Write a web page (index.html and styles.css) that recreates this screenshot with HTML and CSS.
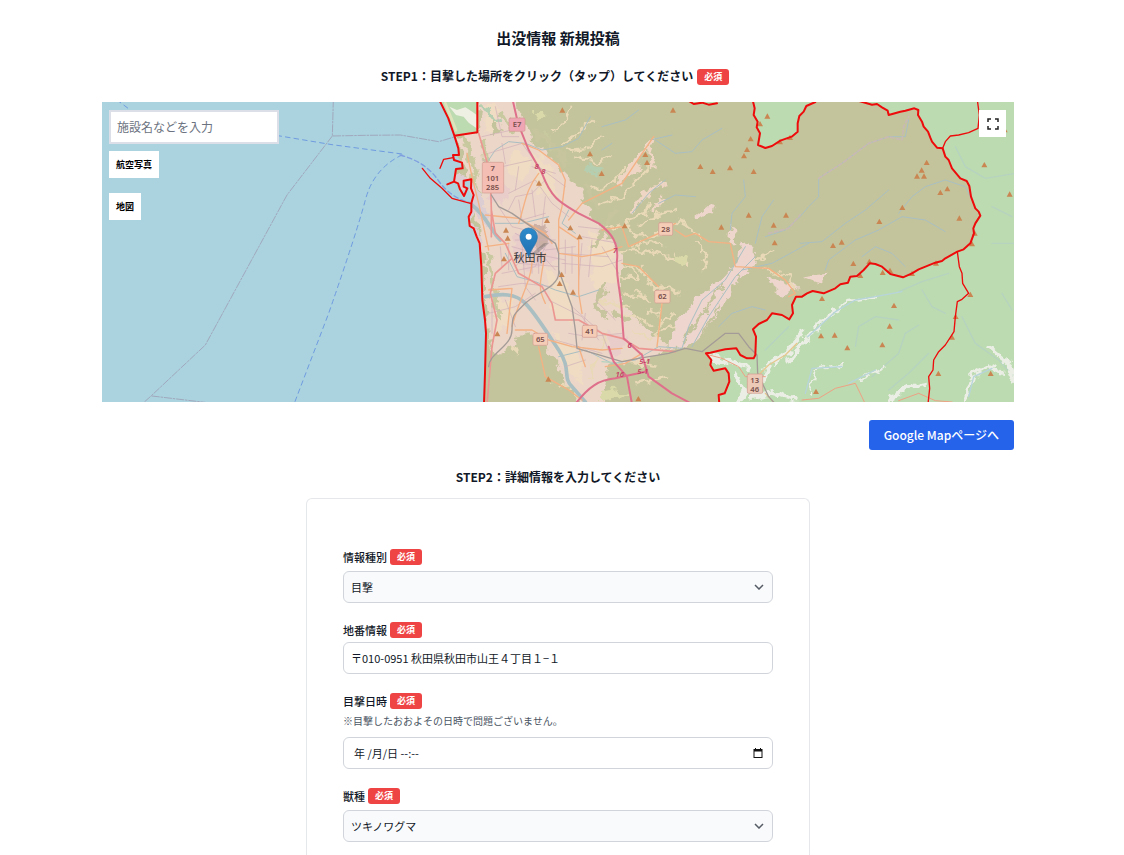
FILE: index.html
```html
<!DOCTYPE html>
<html lang="ja">
<head>
<meta charset="utf-8">
<meta name="viewport" content="width=device-width, initial-scale=1">
<title>出没情報 新規投稿</title>
<link rel="stylesheet" href="styles.css">
</head>
<body>
<main class="page">
  <h1 class="title">出没情報 新規投稿</h1>
  <h2 class="step">STEP1：目撃した場所をクリック（タップ）してください <span class="badge">必須</span></h2>

  <section class="map" aria-label="地図">
    <svg class="map-canvas" viewBox="0 0 2736 900" preserveAspectRatio="xMinYMin slice" role="img" aria-label="秋田市周辺の地図">
      <defs>
        <filter id="ragged" x="-5%" y="-5%" width="110%" height="110%">
          <feTurbulence type="fractalNoise" baseFrequency="0.035" numOctaves="3" seed="4" result="n"/>
          <feDisplacementMap in="SourceGraphic" in2="n" scale="38" xChannelSelector="R" yChannelSelector="G"/>
        </filter>
        <linearGradient id="pinfill" x1="0" y1="0" x2="0" y2="1"><stop offset="0" stop-color="#2e8bcb"/><stop offset="1" stop-color="#1f6fb0"/></linearGradient>
        <path id="peak" d="M0-9 9 7H-9Z" fill="#ca8652"/>
        <path id="city" d="M1057 107 1126 97V0H1756L1775 12 1800 8 1820 14 1845 10 1850 0H1952L1958 25 1955 45 1967 65 1964 82 1974 100 1968 135 1990 144 2010 138 2035 122 2069 110 2087 95V70L2092 48 2105 35 2113 18 2140 6 2279 6 2310 14 2325 12 2340 22 2357 32 2360 45 2395 35 2410 32 2437 25 2449 30 2448 45 2460 65 2465 80 2478 95 2485 113 2490 125 2505 143 2522 145 2530 170 2540 180 2550 205 2575 235 2594 243 2602 258 2607 290 2620 325 2630 335 2635 347 2620 370 2614 385 2616 400 2605 430 2585 448 2566 455 2530 475 2520 483 2500 488 2450 508 2430 520 2403 532 2365 522 2340 500 2320 492 2303 490 2285 510 2265 528 2245 530 2238 548 2215 553 2200 565 2165 580 2132 573 2115 580 2100 590 2082 590 2070 615 2073 640 2062 658 2040 645 2010 640 1995 660 1970 672 1953 688 1962 710 1960 765 1955 775 1935 775 1915 765 1903 745 1870 748 1850 752 1825 758 1812 760 1828 780 1825 795 1835 812 1870 805 1880 820 1882 845 1868 880 1850 885 1852 912H1146L1149 820 1152 700 1141 600 1138 500 1133 440 1120 410 1115 385 1100 378 1100 350 1108 335 1105 315 1112 290 1100 270 1108 240 1086 242 1090 270 1070 275 1074 250 1056 245 1062 207 1080 205 1078 185 1066 170 1069 145Z"/>
        <clipPath id="cityclip"><use href="#city"/></clipPath>
      </defs>
      <rect width="2736" height="900" fill="#aad3df"/>
      <g transform="translate(0 -6)" fill="none" stroke-linecap="round" stroke-linejoin="round">
        <path d="M1012 0 1039 55 1057 107H1200V912H2742V0Z" fill="#bddbb1"/>
        <path d="M1042 20 1065 30 1090 22 1112 36 1124 45V85L1100 68 1085 50 1062 45Z" fill="#eef0e4"/>
        <path d="M1030 10 1062 90" stroke="#dfe3bb" stroke-width="8"/>
        <use href="#city" fill="#c4c49c"/>

        <g filter="url(#ragged)" clip-path="url(#cityclip)">
          <path d="M1062 110 1130 95 1140 0 1230 0 1290 120 1370 200 1420 250 1470 350 1520 410 1560 470 1560 610 1640 690 1700 740 1620 790 1520 790 1500 920 1420 900 1370 800 1330 740 1290 700 1240 710 1230 740 1180 770 1160 700 1148 500 1125 370 1110 260Z" fill="#ecd6c8"/>
          <path d="M1150 10 1190 30 1190 80 1150 95ZM1230 150 1290 180 1270 240 1220 220ZM1330 500 1400 560 1420 670 1350 650ZM1460 390 1530 430 1550 540 1480 570ZM1290 150 1350 200 1370 300 1310 280ZM1350 690 1430 760 1450 860 1380 800ZM1180 600 1240 600 1220 680 1180 690Z" fill="#efdcc2"/>
          <path d="M1240 410 1340 390 1370 470 1290 520 1230 470ZM1180 220 1220 260 1200 320 1160 290ZM1510 690 1580 720 1540 770Z" fill="#e8cdcb"/>
          <path d="M1300 380 1330 375 1335 430 1310 450Z" fill="#cbb0a6"/>
          <path d="M1085 110 1110 180 1130 290M1155 460 1175 560 1190 660M1145 130 1150 180M1200 40 1230 90M1330 100 1350 150" stroke="#c9c9a0" stroke-width="14"/>
          <path d="M1540 330 1500 400 1480 440M1510 560 1480 610 1510 650M1450 250 1490 330M1300 100 1350 130 1390 190M1580 660 1530 640" stroke="#c6c59d" stroke-width="16"/>
          <path d="M1700 720C1740 640 1780 590 1830 560S1910 490 1910 430L1965 440 1960 500C1900 520 1880 600 1840 650S1800 740 1700 750ZM2000 530 2090 560 2050 590 2010 560Z" fill="#eed6cf"/>
          <path d="M1745 720 1800 640 1860 560M1790 720 1850 620" stroke="#c4c49c" stroke-width="7"/>
          <path d="M1780 350 1830 310 1842 312 1820 345 1790 362ZM1884 390 1894 370 1900 430H1882ZM2100 530 2180 520 2150 550Z" fill="#efd6cd"/>
          <g stroke="#e9d9b7" stroke-width="7">
            <path d="M1380 130 1430 100 1470 60M1390 150 1450 145 1500 110M1420 170 1480 190 1530 160M1350 90 1390 65 1410 20M1470 270 1530 250 1570 200M1490 310 1560 290 1640 200M1500 390 1570 370 1630 340 1640 310M1570 370 1600 410 1680 400 1730 360 1760 380 1800 410M1610 380 1640 350 1720 330M1540 450 1600 450 1670 460 1730 480M1600 440 1640 420 1690 440M1560 500 1610 500 1640 540 1660 570M1650 570 1700 560 1730 580M1560 530 1610 540 1590 500M1570 580 1640 600 1600 570M1680 560 1670 650 1670 740M1670 640 1640 630M1675 690 1720 680M1675 670 1710 640M1560 640 1610 650 1650 680M1590 700 1650 710M1780 430 1810 460 1800 510M1720 460 1760 500M1960 480 2020 450M1980 500 2060 530 2080 570M1500 600 1580 620M1510 700 1470 830M1270 780 1230 740M1330 800 1300 770M1350 850 1280 830M1420 890 1390 850 1330 890M1220 850 1250 810 1270 830M1570 780 1660 800M1600 850 1700 830"/>
          </g>
          <path d="M1550 250 1600 190 1650 120M1560 230 1610 200M1640 150 1655 200M1590 330 1640 270 1690 250M1655 330 1680 300" stroke="#efd6c4" stroke-width="13"/>
          <path d="M1715 460 1755 470 1750 500 1725 485ZM1290 30 1330 30 1330 55 1300 60ZM1500 870 1540 860 1580 890 1500 900Z" fill="#d9d9a9"/>
          <path d="M1150 25 1170 50 1190 60M1455 200 1490 210 1480 230Z" stroke="#b5ceb0" stroke-width="12"/>
          <path d="M1155 800 1180 770 1240 770 1310 720 1350 850 1430 912H1150ZM1180 60 1200 90 1170 100Z" fill="#c4c49c"/>
          <path d="M1050 220 1110 230 1170 370 1190 410 1160 390 1120 330 1110 370 1140 430 1130 450 1080 370Z" fill="#dccdd3"/>
        </g>

        <!-- rivers -->
        <g stroke="#a9bfc2" stroke-width="3">
          <path d="M1110 315C1155 350 1165 390 1195 420M1150 590C1200 580 1240 580 1270 610S1330 690 1370 750 1380 830 1410 860L1450 906" stroke-width="11"/>
          <path d="M1210 460 1245 530 1300 545 1360 570 1430 590 1490 570M1160 180 1180 150 1220 125 1270 130 1320 150 1380 140 1430 115 1465 50M1180 370 1260 370 1340 350M1400 330 1380 370 1420 400"/>
          <path d="M1370 770 1450 750 1530 790 1600 780 1670 740 1740 745 1760 680 1800 600 1870 540 1930 440M1770 740 1820 650 1900 530 1960 470M1920 510 2010 490 2120 430"/>
          <path d="M1500 80 1570 60 1610 30M1500 150 1530 130M1660 120 1720 160 1770 155 1800 120 1860 85M1645 120 1710 105M1590 340 1640 280 1690 240M1670 310 1720 285 1780 290M1885 390 1890 340 1930 290 1925 240M1960 430 1980 350 2015 300M1990 410 2050 390 2094 350 2120 320 2150 290 2150 235 2220 190 2300 130 2360 110 2410 110 2420 60M1850 680 1890 640 1950 620 1990 630M2094 430 2160 425 2230 370 2290 330 2360 270M2170 510 2180 480 2260 420 2330 390 2400 350 2470 360 2530 395M2390 340 2430 290 2470 260 2530 240 2590 260 2610 300M2280 470 2320 440 2370 460 2410 500"/>
        </g>
        <path d="M2000 400 2060 385 2094 345M2150 235 2220 190 2300 130 2360 110 2400 120 2405 80 2420 50" stroke="#c9b9b4" stroke-width="5" stroke-dasharray="10 8"/>
        <g stroke="#b5d3bf" stroke-width="4">
          <path d="M2560 140 2590 200 2650 235 2740 220M2670 320 2730 350M2670 430 2740 430M2540 520 2460 545 2390 575M2460 570 2490 620 2530 640M2260 740 2270 680 2320 650 2390 660M2450 675 2410 700 2390 760 2310 830M2360 870 2420 820 2480 760M2580 650 2620 730 2690 780 2736 830M2700 580 2730 630M1500 785 1560 790M1990 750 2060 680M1950 860 1990 840"/>
        </g>
        <g filter="url(#ragged)" stroke="#eaeee5" stroke-width="9">
          <path d="M2110 720 2150 690 2190 640 2240 605 2320 590M2135 680 2220 620" />
          <path d="M2120 890 2140 810 2220 795M2270 840 2350 800" stroke-width="6"/>
          <path d="M2360 900 2420 860 2480 850M2590 890 2610 830 2660 800 2700 820M2660 740 2720 790 2740 840M1985 830 2000 800 2050 760 2100 700M2060 780 2110 720M1900 830 1930 870 1910 900M1830 770 1900 790 1940 800M1950 890 2010 880 2080 900" stroke-width="14"/>
        </g>
        <path d="M2117 710 2200 635 2260 600 2320 590 2400 575M2110 880 2130 805 2220 800M2240 850 2320 810M2600 890 2615 830 2670 805" stroke="#b7d4da" stroke-width="4"/>

        <!-- minor roads -->
        <g stroke="#cfafb8" stroke-width="2">
          <path d="M1160 160 1260 130 1310 200 1390 260M1220 280 1300 240 1350 310 1400 350M1190 320 1230 380 1310 400M1240 400 1330 450 1420 440M1230 440 1340 470 1390 480M1200 520 1300 500 1330 440M1260 430 1270 560 1300 600M1380 460 1520 470M1380 490 1500 500 1560 480M1410 440V520M1390 420V520M1440 430 1430 540M1470 420 1460 530M1160 640 1240 620 1300 580M1410 620 1500 700 1530 780M1400 700 1460 710 1560 700M1340 600 1440 650 1490 720M1180 20 1200 110 1250 110M1140 110 1230 90M1290 200 1360 220M1170 590V700M1210 600 1240 680M1430 380 1520 390M1440 410 1550 430M1280 420 1360 510M1320 400 1240 500M1140 180 1200 200 1290 180M1220 330 1240 290 1290 280 1330 240M1250 300 1260 360 1330 340M1290 270 1300 350M1330 290 1320 380M1195 440 1200 500M1220 430V510M1290 400V520M1310 400V520M1240 420H1360M1250 490 1370 500M1190 560 1260 550 1350 560M1480 600 1540 660M1450 640 1440 720M1360 720 1500 760M1390 800 1450 780M1500 440 1550 520M1250 200 1240 270M1200 130 1210 190"/>
        </g>
        <!-- trunk and primary roads -->
        <g stroke="#f4b183" stroke-width="4">
          <path d="M1095 160 1110 230 1130 310 1160 450M1150 345 1250 355 1330 400 1350 430M1310 220C1270 270 1270 310 1250 370M1150 440 1220 430M1260 130 1310 150 1370 195 1390 240 1380 320 1370 360 1370 460 1440 470 1500 460 1560 440M1370 380 1430 420 1430 580 1440 640M1160 570 1230 565 1215 700M1240 690 1290 690 1340 720 1410 740 1500 750 1560 745M1290 480C1290 540 1250 600 1230 680M1330 460C1310 560 1310 570 1330 610M1400 360 1440 310 1500 280 1560 250 1600 190 1655 110M1500 390 1560 380 1580 440 1670 400 1720 370M1560 490 1610 500 1670 560M1680 610 1665 740M1720 390 1750 410 1780 400 1820 425 1885 430 1900 500 2000 505 2050 540 2080 580 2060 590M1310 740 1330 830 1400 870 1440 900M1430 740 1450 800M1510 800 1570 790 1620 760"/>
        </g>
        <path d="M1130 100 1165 220 1168 330 1180 400 1210 430 1250 520 1320 560 1350 610 1360 660 1430 660 1500 700 1560 715 1610 745 1720 755M1168 330V410M1230 475 1180 520 1165 580 1185 660 1170 740 1155 912" stroke="#ec9692" stroke-width="5"/>
        <path d="M1810 762 1860 775 1910 800 1930 830 1990 830M2100 900 2150 895 2200 865 2260 850 2290 912M2390 902 2450 880 2500 902 2550 906" stroke="#eea184" stroke-width="3"/>
        <path d="M1960 835 2000 795 2050 765 2085 730M1990 880 2020 912" stroke="#e6c78e" stroke-width="4"/>
        <path d="M1168 285 1190 320 1230 340 1360 430 1370 460V520C1370 560 1300 580 1270 610S1230 640 1230 690 1160 760 1160 800M1370 510 1410 620 1420 690 1425 745 1560 785 1610 775 1700 760 1750 745 1800 755 1870 700 1910 700 1940 740 1965 765 1967 820 2000 890 2020 912" stroke="#a39b97" stroke-width="4"/>
        <path d="M1232 0 1248 70 1280 150 1320 220C1350 300 1380 310 1430 340L1490 370C1530 400 1550 430 1545 480S1560 590 1560 650L1565 715 1620 765 1640 830 1710 880 1770 912M1420 912C1460 860 1490 840 1540 835L1630 815M1520 740 1535 785 1575 830 1590 912" stroke="#df708b" stroke-width="6"/>

        <!-- sea routes -->
        <path d="M45 0 85 30M165 50 540 109 690 134 900 162M900 165Q815 205 790 300T680 640L575 915" stroke="#709bdf" stroke-width="3" stroke-dasharray="14 12"/>
        <path d="M694 0 691 108 790 106 895 105 1010 125 1057 111M691 108 555 285 310 735 145 890 120 912M150 888 350 912" stroke="#a1a8bd" stroke-width="3" stroke-dasharray="22 5 5 5"/>
        <path d="M894 165Q970 185 1008 240T1110 310" stroke="#809ee0" stroke-width="4" stroke-dasharray="14 9"/>

        <!-- mountain peaks -->
        <g>
          <use href="#peak" x="1381" y="31"/><use href="#peak" x="1464" y="162"/><use href="#peak" x="1311" y="250"/><use href="#peak" x="1499" y="221"/><use href="#peak" x="1335" y="362"/><use href="#peak" x="1405" y="384"/><use href="#peak" x="1433" y="411"/><use href="#peak" x="1212" y="391"/><use href="#peak" x="1217" y="415"/><use href="#peak" x="1206" y="477"/><use href="#peak" x="1379" y="524"/><use href="#peak" x="1373" y="551"/><use href="#peak" x="1413" y="577"/><use href="#peak" x="1186" y="702"/><use href="#peak" x="1339" y="838"/><use href="#peak" x="1609" y="897"/>
          <use href="#peak" x="1713" y="31"/><use href="#peak" x="1630" y="164"/><use href="#peak" x="1635" y="188"/><use href="#peak" x="1568" y="378"/><use href="#peak" x="1795" y="200"/><use href="#peak" x="1832" y="215"/><use href="#peak" x="1884" y="204"/><use href="#peak" x="1955" y="215"/><use href="#peak" x="1926" y="168"/><use href="#peak" x="1935" y="149"/><use href="#peak" x="1946" y="117"/><use href="#peak" x="1996" y="49"/><use href="#peak" x="1974" y="72"/><use href="#peak" x="1940" y="346"/><use href="#peak" x="2052" y="346"/><use href="#peak" x="2015" y="376"/><use href="#peak" x="2018" y="429"/><use href="#peak" x="1858" y="382"/><use href="#peak" x="2034" y="126"/><use href="#peak" x="2064" y="113"/>
          <use href="#peak" x="2474" y="188"/><use href="#peak" x="2459" y="211"/><use href="#peak" x="2445" y="229"/><use href="#peak" x="2466" y="229"/><use href="#peak" x="2536" y="267"/><use href="#peak" x="2515" y="278"/><use href="#peak" x="2401" y="323"/><use href="#peak" x="2332" y="365"/><use href="#peak" x="2572" y="355"/><use href="#peak" x="2219" y="427"/><use href="#peak" x="2193" y="437"/><use href="#peak" x="2254" y="491"/><use href="#peak" x="2302" y="485"/><use href="#peak" x="2342" y="518"/><use href="#peak" x="2364" y="512"/><use href="#peak" x="2160" y="596"/><use href="#peak" x="2376" y="617"/><use href="#peak" x="2363" y="679"/><use href="#peak" x="2341" y="735"/><use href="#peak" x="2157" y="708"/><use href="#peak" x="2198" y="706"/><use href="#peak" x="2236" y="744"/><use href="#peak" x="2142" y="875"/><use href="#peak" x="2509" y="821"/><use href="#peak" x="2666" y="821"/><use href="#peak" x="2647" y="195"/><use href="#peak" x="2723" y="283"/><use href="#peak" x="2605" y="584"/><use href="#peak" x="2561" y="650"/><use href="#peak" x="2550" y="712"/><use href="#peak" x="2618" y="400"/><use href="#peak" x="2610" y="432"/><use href="#peak" x="2502" y="490"/><use href="#peak" x="2430" y="521"/><use href="#peak" x="2275" y="527"/><use href="#peak" x="2708" y="90"/>
        </g>

        <!-- municipal borders -->
        <g stroke="#ee0b0b">
          <path d="M1012 0 1039 55 1057 107 1126 97V0M1057 107 1069 145 1071 165 1053 165 1056 180 1080 188 1082 205 1062 207 1056 245 1036 253M1056 245 1068 250 1074 268 1086 288 1096 265 1085 260V242L1108 238 1107 265 1115 285 1108 310 1108 335 1100 350 1103 378 1115 385 1124 410 1133 430 1138 500 1141 600 1149 660 1152 700 1149 820 1146 912" stroke-width="6"/>
          <path d="M961 205 985 235 1020 265 1050 295 1105 310M1014 205 1025 178 1053 173" stroke-width="4"/>
          <path d="M1756 0 1775 12 1800 8 1820 14 1845 10M1952 0 1958 25 1955 45 1967 65 1964 82 1974 100 1968 135 1990 144 2010 138 2035 122 2069 110 2087 95V70L2092 48 2105 35 2113 18 2140 6M2274 4 2310 14 2325 12 2340 22 2357 32 2360 45 2395 35 2410 32 2437 25 2449 30 2448 45 2460 65 2465 80 2478 95 2485 113 2490 125 2505 143 2522 145 2530 170 2540 180 2550 205 2575 235 2594 243 2602 258 2607 290 2620 325 2630 335 2635 347 2620 370 2614 385 2616 400 2605 430 2585 448 2566 455 2530 475 2520 483 2500 488 2450 508 2430 520 2403 532 2365 522 2340 500 2320 492 2303 490 2285 510 2265 528 2245 530 2238 548 2215 553 2200 565 2165 580 2132 573 2115 580 2100 590 2082 590 2070 615 2073 640 2062 658 2040 645 2010 640 1995 660 1970 672 1953 688 1962 710 1960 765 1955 775 1935 775 1915 765 1903 745 1870 748 1850 752 1825 758 1812 760 1828 780 1825 795 1835 812 1870 805 1880 820 1882 845 1868 880 1850 885 1852 912" stroke-width="6"/>
          <path d="M2626 0 2632 45 2628 85 2600 98 2570 105 2545 108 2530 125 2522 145M2566 455 2572 500 2580 520 2582 550 2600 580 2580 598 2566 605 2560 650 2556 695 2530 735 2510 755 2495 780 2493 810 2480 830 2483 865 2478 912" stroke-width="4"/>
        </g>

        <!-- road shields -->
        <g stroke="#d29b91" stroke-width="2" fill="#f5beb4">
          <rect x="1221" y="54" width="48" height="40" rx="4" fill="#f0a5b5"/>
          <rect x="1141" y="187" width="64" height="92" rx="4"/>
          <g fill="#f5ccb6"><rect x="1670" y="368" width="42" height="38" rx="4"/><rect x="1658" y="571" width="46" height="38" rx="4"/><rect x="1441" y="676" width="44" height="36" rx="4"/><rect x="1293" y="700" width="44" height="36" rx="4"/></g>
          <rect x="1936" y="822" width="46" height="58" rx="4" fill="#edc9b8"/>
        </g>
        <g class="map-shield">
          <text x="1245" y="82">E7</text><text x="1172" y="214">7</text><text x="1172" y="242">101</text><text x="1172" y="270">285</text>
          <text x="1691" y="395">28</text><text x="1681" y="598">62</text><text x="1463" y="703">41</text><text x="1315" y="727">65</text>
          <text x="1958" y="848">13</text><text x="1958" y="875">46</text>
        </g>
        <g class="map-exit">
          <text x="1304" y="206">8</text><text x="1324" y="223">8</text><text x="1539" y="458">7</text><text x="1583" y="745">6</text><text x="1628" y="793">5-1</text><text x="1622" y="822">5-1</text><text x="1553" y="832">16</text>
        </g>
        <text class="map-city" x="1284" y="486">秋田市</text>

        <!-- location pin -->
        <path d="M1284 465 1325 430 1342 428 1300 466Z" fill="#555" opacity=".35"/>
        <path d="M1280 471C1272 443 1254 431 1254 410A26 26 0 0 1 1306 410C1306 431 1288 443 1280 471Z" fill="url(#pinfill)" stroke="#2472ad" stroke-width="2"/>
        <circle cx="1280" cy="410" r="9" fill="#fff"/>
      </g>
    </svg>
    <div class="map-tools">
      <input class="map-search" type="text" placeholder="施設名などを入力" aria-label="施設名などを入力">
      <button class="map-button" type="button">航空写真</button>
      <button class="map-button" type="button">地図</button>
    </div>
    <button class="map-full" type="button" aria-label="全画面表示">
      <svg viewBox="0 0 12 12" width="12" height="12" fill="none" stroke="#222" stroke-width="1.500"><path d="M1 4V1H4M8 1H11V4M11 8V11H8M4 11H1V8"/></svg>
    </button>
  </section>

  <div class="actions"><a class="map-link" href="#map">Google Mapページへ</a></div>

  <h2 class="step step-two">STEP2：詳細情報を入力してください</h2>

  <form class="card">
    <div class="field">
      <div class="label-row"><label for="kind">情報種別</label><span class="badge">必須</span></div>
      <div class="select-box">
        <select class="control" id="kind"><option>目撃</option></select>
        <svg class="chevron" viewBox="0 0 10 6" width="10" height="6" fill="none" stroke="#555b65" stroke-width="1.5"><path d="m1 1 4 4 4-4"/></svg>
      </div>
    </div>
    <div class="field">
      <div class="label-row tight"><label for="address">地番情報</label><span class="badge">必須</span></div>
      <input class="control" id="address" type="text" value="〒010-0951 秋田県秋田市山王４丁目１−１">
    </div>
    <div class="field">
      <div class="label-row tight"><label for="when">目撃日時</label><span class="badge">必須</span></div>
      <p class="note">※目撃したおおよその日時で問題ございません。</p>
      <div class="date-box">
        <input class="control date" id="when" type="text" value="年 /月/日 --:--">
        <button class="calendar" type="button" aria-label="日時を選択">
          <svg viewBox="0 0 10 10" width="10" height="10"><path d="M2 0h1v1h4V0h1v1h1.500v9H.5V1H2ZM1.500 3.500V9h7V3.500Z" fill="#111" fill-rule="evenodd"/></svg>
        </button>
      </div>
    </div>
    <div class="field">
      <div class="label-row"><label for="animal">獣種</label><span class="badge">必須</span></div>
      <div class="select-box">
        <select class="control" id="animal"><option>ツキノワグマ</option></select>
        <svg class="chevron" viewBox="0 0 10 6" width="10" height="6" fill="none" stroke="#555b65" stroke-width="1.5"><path d="m1 1 4 4 4-4"/></svg>
      </div>
    </div>
  </form>
</main>
</body>
</html>
```

FILE: styles.css
```css
* {
  box-sizing: border-box;
}

body {
  margin: 0;
  padding-right: 8px;
  background: #fff;
  color: #111827;
  font-family: "Noto Sans CJK JP", sans-serif;
  font-size: 12px;
  line-height: 18px;
}

button,
input,
select {
  font-family: inherit;
  color: inherit;
}

.page {
  display: flex;
  flex-direction: column;
  max-width: 912px;
  min-height: 100vh;
  margin: 0 auto;
  padding-top: 26px;
}

.title {
  margin: 0 0 16px;
  font-size: 15px;
  font-weight: 600;
  line-height: 24px;
  text-align: center;
}

.step {
  display: flex;
  justify-content: center;
  align-items: center;
  gap: 4px;
  margin: 0 0 16px;
  padding-right: 6px;
  font-size: 12px;
  font-weight: 600;
  line-height: 20px;
}

.step-two {
  margin: 17px 0 11px;
  padding-right: 0;
}

.badge {
  padding: 0 7px;
  border-radius: 3px;
  background: #ef4444;
  color: #fff;
  font-size: 9px;
  font-weight: 700;
  line-height: 16px;
  white-space: nowrap;
}

.step .badge {
  margin-top: 2px;
}

.map {
  position: relative;
  height: 300px;
  overflow: hidden;
  background: #aad3df;
}

.map-canvas {
  display: block;
  width: 100%;
  height: 100%;
}

.map-shield,
.map-exit,
.map-city {
  font-family: "Noto Sans", "Noto Sans CJK JP", sans-serif;
  text-anchor: middle;
  stroke: none;
}

.map-shield {
  fill: #774f4b;
  font-size: 23px;
  font-weight: 600;
}

.map-exit {
  fill: #c43c62;
  font-size: 23px;
  font-style: italic;
  font-weight: 600;
}

.map-city {
  fill: #333;
  font-size: 33px;
}

.map-tools {
  position: absolute;
  top: 8px;
  left: 7px;
  display: flex;
  flex-direction: column;
  align-items: flex-start;
}

.map-search {
  width: 170px;
  height: 34px;
  margin-bottom: 7px;
  padding: 0 6px 2px;
  border: 2px solid #dcdfe7;
  background: #fff;
  font-size: 12px;
}

.map-search::placeholder {
  color: #6b7280;
  opacity: 1;
}

.map-button {
  height: 27px;
  margin-bottom: 15px;
  padding: 0 7px;
  border: 0;
  background: #fff;
  color: #000;
  font-size: 9px;
  font-weight: 700;
}

.map-full {
  position: absolute;
  top: 8px;
  right: 8px;
  display: grid;
  place-items: center;
  width: 27px;
  height: 27px;
  padding: 0;
  border: 0;
  background: #fff;
}

.actions {
  display: flex;
  justify-content: flex-end;
  margin-top: 18px;
}

.map-link {
  padding: 0 15px;
  border-radius: 3px;
  background: #2563eb;
  color: #fff;
  font-weight: 500;
  line-height: 30px;
  text-decoration: none;
}

.card {
  display: flex;
  flex: 1;
  flex-direction: column;
  gap: 19px;
  width: 100%;
  max-width: 504px;
  margin: 0 auto;
  padding: 50px 36px 12px;
  border: 1px solid #e5e7eb;
  border-bottom: 0;
  border-radius: 6px 6px 0 0;
}

.label-row {
  display: flex;
  align-items: center;
  gap: 3px;
  margin-bottom: 6px;
  font-size: 11px;
  font-weight: 500;
  line-height: 16px;
}

.label-row.tight {
  margin-bottom: 4px;
}

.note {
  margin: 0 0 8px;
  color: #4b5563;
  font-size: 10px;
  line-height: 16px;
}

.control {
  display: block;
  width: 100%;
  height: 32px;
  padding: 0 7px;
  border: 1px solid #d1d5db;
  border-radius: 6px;
  background: #fff;
  font-size: 11px;
}

.select-box,
.date-box {
  position: relative;
}

.select-box .control {
  appearance: none;
  background: #f9fafb;
}

.chevron {
  position: absolute;
  top: 13px;
  right: 9px;
  pointer-events: none;
}

.control.date {
  padding: 0 30px 0 10px;
}

.calendar {
  position: absolute;
  top: 11px;
  right: 10px;
  display: flex;
  padding: 0;
  border: 0;
  background: none;
}
```
